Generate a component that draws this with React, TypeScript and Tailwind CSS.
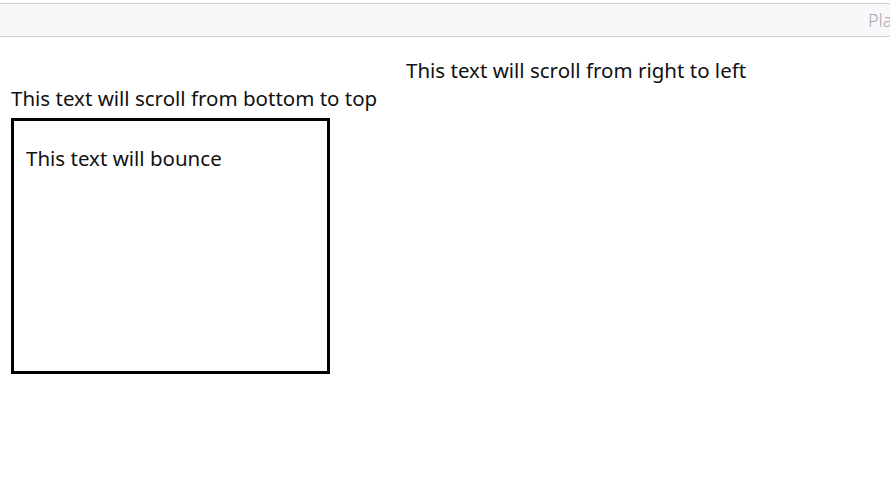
import React from 'react';

export default function App() {
  return (
    <main
      className="h-[479px] w-[890px] overflow-hidden bg-white text-[#111]"
      style={{ fontFamily: '"Noto Sans", "Open Sans", sans-serif' }}
    >
      <div className="mt-[3px] flex h-[34px] items-center overflow-hidden border-y border-[#cfcfcf] bg-[#f8f8fa] pl-[868px]">
        <input
          type="text"
          placeholder="Placeholder"
          className="w-[200px] shrink-0 bg-transparent text-[18px] font-light text-[#999] placeholder:text-[#aaaaaa] outline-none"
        />
      </div>

      <div className="pt-[20px] pl-[406px] text-[20.5px] leading-[27px] whitespace-nowrap">
        This text will scroll from right to left
      </div>

      <div className="pt-[1px] pl-[11px] text-[20.5px] leading-[27px] whitespace-nowrap">
        This text will scroll from bottom to top
      </div>

      <div className="mt-[6px] ml-[11px] h-[256px] w-[319px] border-[3px] border-black px-[12px] py-[24px]">
        <p className="text-[20.5px] leading-[27px] whitespace-nowrap">This text will bounce</p>
      </div>
    </main>
  );
}
